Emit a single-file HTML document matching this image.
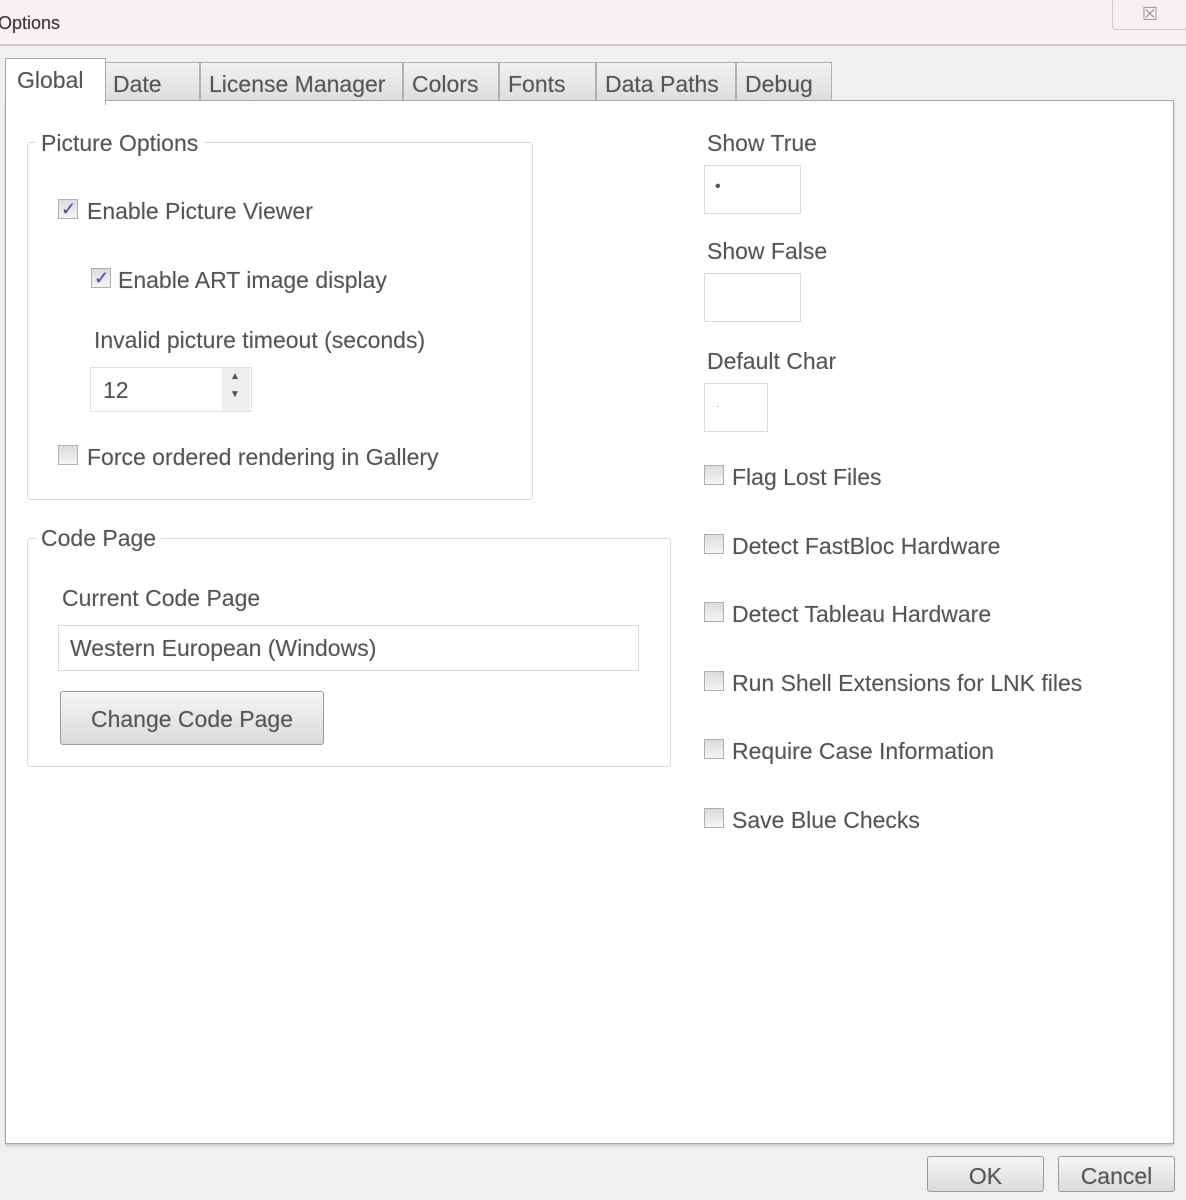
<!DOCTYPE html>
<html><head><style>
body{margin:0;width:1186px;height:1200px;background:#f0f0f0;position:relative;overflow:hidden;font-family:"Liberation Sans",sans-serif;color:#555;}
.a{position:absolute;white-space:nowrap;font-size:23px;line-height:30px;margin-top:2px;text-shadow:0 0 1px rgba(80,80,80,0.4);}
.box{position:absolute;border:1px solid #dcdcdc;border-radius:3px;}
.in{position:absolute;background:#fff;border:1px solid #dcdcdc;}
.cb{position:absolute;width:18px;height:18px;border:1px solid #b0b0b0;background:linear-gradient(#dcdcdc,#f4f4f4);}
.tab{position:absolute;top:62px;height:38px;background:linear-gradient(#f2f2f2,#dedede);border:1px solid #b0b0b0;border-bottom:none;font-size:23px;line-height:42px;padding-left:8px;box-sizing:border-box;text-shadow:0 0 1px rgba(80,80,80,0.4);}
.btn{position:absolute;border:1px solid #9a9a9a;border-radius:3px;background:linear-gradient(#f6f6f6,#dadada);font-size:23px;text-align:center;box-sizing:border-box;text-shadow:0 0 1px rgba(80,80,80,0.4);}
</style></head><body>
<div style="position:absolute;left:0;top:0;width:1186px;height:44px;background:#f8f1f6;border-bottom:2px solid #c8c8c8"></div>
<div class="a" style="left:-2px;top:6px;font-size:18px;color:#333">Options</div>
<div style="position:absolute;left:1112px;top:-2px;width:74px;height:30px;border:1px solid #c8c8c8;border-radius:4px;background:#f4f0f3;text-align:center;font-size:18px;color:#999;line-height:30px">☒</div>
<div style="position:absolute;left:5px;top:100px;width:1167px;height:1042px;background:#fff;border:1px solid #a8a8a8;box-shadow:0 2px 2px #ccc"></div>
<div class="tab" style="left:104px;width:96px">Date</div>
<div class="tab" style="left:200px;width:203px">License Manager</div>
<div class="tab" style="left:403px;width:96px">Colors</div>
<div class="tab" style="left:499px;width:97px">Fonts</div>
<div class="tab" style="left:596px;width:140px">Data Paths</div>
<div class="tab" style="left:736px;width:96px">Debug</div>
<div style="position:absolute;left:5px;top:58px;width:99px;height:46px;background:#fff;border:1px solid #a8a8a8;border-bottom:none;"></div>
<div class="a" style="left:17px;top:63px">Global</div>

<div class="box" style="left:27px;top:142px;width:504px;height:356px"></div>
<div class="a" style="left:36px;top:126px;background:#fff;padding:0 5px">Picture Options</div>
<div class="cb" style="left:58px;top:199px"></div><div class="a" style="left:61px;top:192px;font-size:18px;color:#4848b0">✓</div>
<div class="a" style="left:87px;top:194px">Enable Picture Viewer</div>
<div class="cb" style="left:91px;top:268px"></div><div class="a" style="left:94px;top:261px;font-size:18px;color:#4848b0">✓</div>
<div class="a" style="left:118px;top:263px">Enable ART image display</div>
<div class="a" style="left:94px;top:323px">Invalid picture timeout (seconds)</div>
<div class="in" style="left:90px;top:367px;width:160px;height:43px;border-color:#e0e0e0"></div>
<div style="position:absolute;left:222px;top:368px;width:28px;height:43px;background:#eee"></div>
<div class="a" style="left:230px;top:366px;font-size:10px;line-height:18px;color:#555">▲<br>▼</div>
<div class="a" style="left:103px;top:373px">12</div>
<div class="cb" style="left:58px;top:445px"></div>
<div class="a" style="left:87px;top:440px">Force ordered rendering in Gallery</div>

<div class="box" style="left:27px;top:538px;width:642px;height:227px"></div>
<div class="a" style="left:36px;top:521px;background:#fff;padding:0 5px">Code Page</div>
<div class="a" style="left:62px;top:581px">Current Code Page</div>
<div class="in" style="left:58px;top:625px;width:579px;height:44px"></div>
<div class="a" style="left:70px;top:631px">Western European (Windows)</div>
<div class="btn" style="left:60px;top:691px;width:264px;height:54px;line-height:54px">Change Code Page</div>

<div class="a" style="left:707px;top:126px">Show True</div>
<div class="in" style="left:704px;top:165px;width:95px;height:47px"></div>
<div class="a" style="left:715px;top:170px;font-size:16px">•</div>
<div class="a" style="left:707px;top:234px">Show False</div>
<div class="in" style="left:704px;top:273px;width:95px;height:47px"></div>
<div class="a" style="left:707px;top:344px">Default Char</div>
<div class="in" style="left:704px;top:383px;width:62px;height:47px"></div>
<div class="a" style="left:716px;top:390px;font-size:10px;color:#aaa">·</div>
<div class="cb" style="left:704px;top:465px"></div><div class="a" style="left:732px;top:460px">Flag Lost Files</div>
<div class="cb" style="left:704px;top:534px"></div><div class="a" style="left:732px;top:529px">Detect FastBloc Hardware</div>
<div class="cb" style="left:704px;top:602px"></div><div class="a" style="left:732px;top:597px">Detect Tableau Hardware</div>
<div class="cb" style="left:704px;top:671px"></div><div class="a" style="left:732px;top:666px">Run Shell Extensions for LNK files</div>
<div class="cb" style="left:704px;top:739px"></div><div class="a" style="left:732px;top:734px">Require Case Information</div>
<div class="cb" style="left:704px;top:808px"></div><div class="a" style="left:732px;top:803px">Save Blue Checks</div>

<div class="btn" style="left:927px;top:1156px;width:117px;height:36px;line-height:38px">OK</div>
<div class="btn" style="left:1058px;top:1156px;width:117px;height:36px;line-height:38px">Cancel</div>
</body></html>
